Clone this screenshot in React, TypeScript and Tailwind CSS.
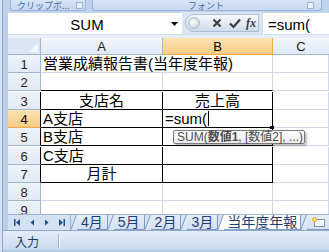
import React from "react";

const rows: { h: number; n: string }[] = [
  { h: 18, n: "1" },
  { h: 19, n: "2" },
  { h: 18, n: "3" },
  { h: 18, n: "4" },
  { h: 19, n: "5" },
  { h: 18, n: "6" },
  { h: 18, n: "7" },
  { h: 18, n: "8" },
  { h: 13, n: "9" },
];

function RowHeader({ n, active, dark }: { n: string; active?: boolean; dark?: boolean }) {
  return (
    <div
      className={
        "h-[18px] border-b border-r flex items-center justify-center text-[13px] leading-none pt-[1px] font-['Liberation_Sans',sans-serif] " +
        (active
          ? "bg-gradient-to-b from-[#fbe2b1] to-[#f6cd86] text-black border-b-[#f2a94a] "
          : "bg-gradient-to-b from-[#eef3fa] to-[#e2eaf6] text-[#222] border-b-[#9eb6ce] ") +
        (dark ? "border-r-black" : "border-r-[#9eb6ce]")
      }
    >
      {n}
    </div>
  );
}

function Cell({
  children,
  center,
  bBottom,
  bRight,
  extra,
}: {
  children?: React.ReactNode;
  center?: boolean;
  bBottom?: boolean;
  bRight?: boolean;
  extra?: string;
}) {
  return (
    <div
      className={
        "h-[18px] bg-white border-b border-r flex items-end text-[15px] leading-[17px] whitespace-nowrap " +
        (center ? "justify-center " : "pl-[2px] ") +
        (bBottom ? "border-b-black " : "border-b-[#d0d7e5] ") +
        (bRight ? "border-r-black " : "border-r-[#d0d7e5] ") +
        (extra || "")
      }
    >
      {children}
    </div>
  );
}

function Slant({ active }: { active?: boolean }) {
  return (
    <svg width="6" height="16" viewBox="0 0 6 16" className="shrink-0">
      <path d="M0 15.5 L5.5 0.5 L6 0.5 L6 15.5 Z" fill={active ? "#ffffff" : "#dce6f4"} />
      <path d="M0 15.5 L5.5 0.5" stroke="#7f9cc7" strokeWidth="1" fill="none" />
    </svg>
  );
}

function Tab({ label }: { label: string }) {
  return (
    <div className="flex items-stretch h-[16px] shrink-0">
      <Slant />
      <div className="h-[16px] flex items-center px-[4px] text-[14px] leading-none whitespace-nowrap border-r border-b border-[#7f9cc7] bg-gradient-to-b from-[#e6eef9] to-[#d3e0f2] text-[#1f3f73] font-['Liberation_Sans','Noto_Sans_CJK_JP',sans-serif]">
        {label}
      </div>
    </div>
  );
}

export default function App() {
  return (
    <div className="w-[329px] h-[252px] overflow-hidden bg-[#c3d6ee] flex flex-col font-['Liberation_Sans','Noto_Sans_CJK_JP',sans-serif] text-black">
      {/* ribbon bottom */}
      <div className="h-[12px] flex shrink-0 bg-[#bfd2eb]">
        <div className="w-[10px] shrink-0 border-l-2 border-[#d6e3f4] shadow-[inset_1px_0_0_#8ba5cc]" />
        <div className="w-[76px] h-[11px] rounded-b-[3px] border border-t-0 border-[#99b4da] bg-gradient-to-b from-[#d6e4f5] to-[#c6d8f0] flex items-center pl-[6px] pr-[2px]">
          <span className="text-[9px] leading-none text-[#4a6ea8] flex-1 whitespace-nowrap font-['Noto_Sans_CJK_JP',sans-serif]">クリップボ...</span>
          <div className="w-[7px] h-[7px] border border-[#9fb4d2] bg-[#e9f0f9]" />
        </div>
        <div className="w-[6px]" />
        <div className="w-[230px] h-[11px] rounded-b-[3px] border border-t-0 border-[#99b4da] bg-gradient-to-b from-[#d6e4f5] to-[#c6d8f0] flex items-center pr-[7px]">
          <span className="text-[9px] leading-none text-[#4a6ea8] flex-1 text-center pl-[12px] whitespace-nowrap font-['Noto_Sans_CJK_JP',sans-serif]">フォント</span>
          <div className="w-[7px] h-[7px] border border-[#9fb4d2] bg-[#e9f0f9]" />
        </div>
      </div>

      {/* middle */}
      <div className="flex flex-1 min-h-0">
        <div className="w-[8px] shrink-0 border-l-2 border-[#d6e3f4] shadow-[inset_1px_0_0_#8ba5cc] bg-[#bdd0ea]" />
        <div className="flex-1 flex flex-col min-w-0">
          {/* formula bar */}
          <div className="h-[22px] shrink-0 flex bg-[#dbe6f4]">
            <div className="w-[174px] shrink-0 bg-white border-t border-[#c9d7ea] flex items-center">
              <div className="w-[158px] text-center text-[15px] leading-none pt-[1px]">SUM</div>
              <svg width="7" height="4" viewBox="0 0 7 4" className="ml-[5px]">
                <path d="M0 0 H7 L3.5 4 Z" fill="#000" />
              </svg>
            </div>
            <div className="w-[3px]" />
            <div className="w-[74px] h-[18px] mt-[2px] rounded-l-full rounded-r-[2px] border border-[#a9bcd8] bg-gradient-to-b from-[#f7f9fd] to-[#cfdbeb] flex items-center">
              <div className="w-[12px] h-[12px] ml-[2px] rounded-full bg-[radial-gradient(circle_at_40%_40%,#ffffff,#b9c4d3)] border border-[#aeb9c9]" />
              <svg width="10" height="10" viewBox="0 0 10 10" className="ml-[12px]">
                <path d="M1.5 1.5 L8.5 8.5 M8.5 1.5 L1.5 8.5" stroke="#3c3c3c" strokeWidth="2" />
              </svg>
              <svg width="12" height="11" viewBox="0 0 12 11" className="ml-[7px]">
                <path d="M1 5.5 L4.5 9 L11 1.5" stroke="#3c3c3c" strokeWidth="2.2" fill="none" />
              </svg>
              <span className="ml-[5px] text-[12px] leading-none italic font-bold font-['Liberation_Serif',serif] text-[#3c3c3c]">fx</span>
            </div>
            <div className="w-[3px]" />
            <div className="flex-1 bg-white border-t border-l border-[#c9d7ea] flex items-center pl-[5px] text-[15px] leading-none pt-[1px]">
              =sum(
            </div>
          </div>
          <div className="h-[4px] shrink-0 bg-[#e9eef6] border-t border-[#d5dfec]" />

          {/* column headers */}
          <div className="h-[17px] shrink-0 grid grid-cols-[33px_122px_110px_1fr] font-['Liberation_Sans',sans-serif] text-[13px] leading-none">
            <div className="border-r border-b border-[#9eb6ce] bg-[#dbe5f3] flex items-end justify-end p-[2px]">
              <svg width="9" height="9" viewBox="0 0 9 9">
                <path d="M9 0 V9 H0 Z" fill="#f4f7fb" />
              </svg>
            </div>
            <div className="border-r border-b border-[#9eb6ce] bg-gradient-to-b from-[#f3f6fb] to-[#e1e9f5] flex items-center justify-center text-[#222]">A</div>
            <div className="border-r border-r-[#f2a94a] border-b border-b-[#f2a94a] bg-gradient-to-b from-[#fbe2b1] to-[#f6cd86] flex items-center justify-center">B</div>
            <div className="border-b border-[#9eb6ce] bg-gradient-to-b from-[#f3f6fb] to-[#e1e9f5] flex items-center justify-center text-[#222]">C</div>
          </div>

          {/* rows */}
          <div className="flex-1 min-h-0 flex flex-col bg-white">
            {rows.map((r, i) => {
              const idx = i + 1;
              const inTable = idx >= 3 && idx <= 7;
              const topOfTable = idx === 2;
              return (
                <div
                  key={r.n}
                  className={"grid grid-cols-[33px_122px_110px_1fr] shrink-0 " + (idx === 4 ? "overflow-visible relative z-10" : "overflow-hidden")}
                  style={{ height: r.h }}
                >
                  <RowHeader n={r.n} active={idx === 4} dark={inTable} />
                  {idx === 1 ? (
                    <div className="col-span-2 h-[18px] bg-white border-b border-r border-[#d0d7e5] flex items-end pl-[2px] text-[15px] leading-[17px] whitespace-nowrap">
                      営業成績報告書(当年度年報)
                    </div>
                  ) : (
                    <>
                      <Cell center={idx === 3 || idx === 7} bBottom={inTable || topOfTable} bRight={inTable}>
                        {idx === 3 ? "支店名" : idx === 4 ? "A支店" : idx === 5 ? "B支店" : idx === 6 ? "C支店" : idx === 7 ? "月計" : null}
                      </Cell>
                      <Cell center={idx === 3} bBottom={inTable || topOfTable} bRight={inTable} extra={idx === 4 ? "relative overflow-visible" : ""}>
                        {idx === 3 ? "売上高" : null}
                        {idx === 4 ? (
                          <>
                            <span>=sum(</span>
                            <span className="inline-block w-[1px] h-[15px] bg-black mb-[1px] ml-[1px]" />
                            <div className="absolute right-[-2px] bottom-[-2px] w-[4px] h-[3px] bg-black" />
                            <div className="absolute left-[10px] top-[20px] w-[132px] h-[14px] rounded-[2px] border border-[#7a7a7a] bg-gradient-to-b from-[#ffffff] to-[#ececec] shadow-[2px_2px_2px_rgba(0,0,0,0.25)] flex items-center pl-[3px] text-[12px] leading-none text-[#4d4d4d] whitespace-nowrap font-['Liberation_Sans','Noto_Sans_CJK_JP',sans-serif]">
                              SUM(<b className="font-bold">数値1</b>, [数値2], ...)
                            </div>
                          </>
                        ) : null}
                      </Cell>
                    </>
                  )}
                  <Cell />
                </div>
              );
            })}
          </div>

          {/* tab bar */}
          <div className="h-[16px] shrink-0 flex bg-[#d4e1f2] border-t border-[#9db3d3] overflow-hidden">
            <div className="w-[62px] shrink-0 flex items-center pl-[5px]">
              <svg width="56" height="9" viewBox="0 0 56 9">
                <rect x="1" y="1" width="1.5" height="7" fill="#1f4e8c" />
                <path d="M7 1 L3 4.5 L7 8 Z" fill="#1f4e8c" />
                <path d="M21 1.5 L17.5 4.5 L21 7.5 Z" fill="#1f4e8c" />
                <path d="M32 1.5 L35.5 4.5 L32 7.5 Z" fill="#1f4e8c" />
                <path d="M46 1 L50 4.5 L46 8 Z" fill="#1f4e8c" />
                <rect x="50.5" y="1" width="1.5" height="7" fill="#1f4e8c" />
              </svg>
            </div>
            <div className="w-[1px] shrink-0 bg-[#9db3d3]" />
            <div className="flex items-start -mt-[1px] shrink-0">
              <Tab label="4月" />
              <Tab label="5月" />
              <Tab label="2月" />
              <Tab label="3月" />
              <div className="flex items-stretch h-[16px] shrink-0">
                <Slant active />
                <div className="h-[16px] flex items-center px-[3px] text-[14px] leading-none whitespace-nowrap bg-white border-r border-b border-[#7f9cc7] text-[#1f3f73]">
                  当年度年報
                </div>
              </div>
              <div className="flex items-stretch h-[16px] shrink-0">
                <Slant />
                <div className="h-[16px] w-[24px] flex items-center pl-[4px] bg-gradient-to-b from-[#e6eef9] to-[#d3e0f2] border-b border-[#7f9cc7]">
                  <svg width="14" height="11" viewBox="0 0 14 11">
                    <rect x="3.5" y="3.5" width="10" height="7" fill="#f4f6fa" stroke="#8796ad" />
                    <circle cx="3.5" cy="3.5" r="2.5" fill="#f7b531" />
                    <circle cx="3.5" cy="3.5" r="1.2" fill="#fff3c4" />
                  </svg>
                </div>
              </div>
            </div>
          </div>
        </div>
      </div>

      {/* status bar */}
      <div className="h-[22px] shrink-0 flex items-stretch border-l-2 border-[#d6e3f4] bg-[#bdd0ea]">
        <div className="flex-1 flex items-stretch border-t border-l border-[#8ea8cc] bg-gradient-to-b from-[#e4edf8] to-[#c6d8f0] shadow-[inset_0_-2px_0_#b4c9e6]">
          <div className="w-[55px] flex items-center pl-[12px] text-[12px] leading-none text-[#1e395b] font-['Noto_Sans_CJK_JP',sans-serif]">入力</div>
          <div className="w-[1px] my-[3px] bg-[#9fb6d6] shadow-[1px_0_0_#f2f6fb]" />
        </div>
      </div>
    </div>
  );
}
